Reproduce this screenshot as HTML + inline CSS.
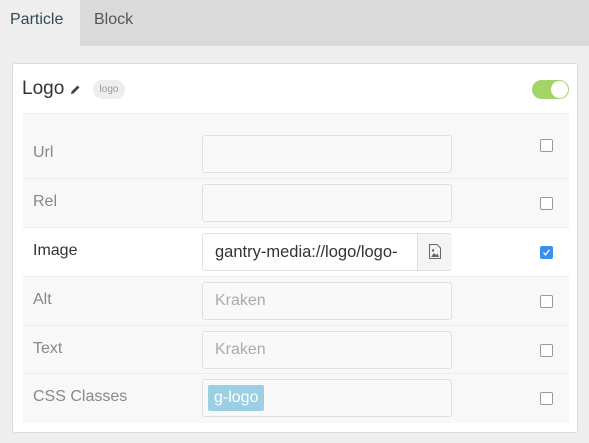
<!DOCTYPE html>
<html><head><style>
*{box-sizing:border-box;margin:0;padding:0}
body{width:589px;height:443px;background:#eeeeee;font-family:"Liberation Sans",sans-serif;position:relative;overflow:hidden}
.tabs{position:absolute;left:0;top:0;width:589px;height:46px;background:#dadada}
.tab{position:absolute;top:0;height:46px;line-height:40px;font-size:16px}
.card{position:absolute;left:12px;top:63px;width:566px;height:370px;background:#fff;border:1px solid #ddd;border-radius:3px}
.row{position:absolute;left:10px;width:546px;background:#f8f8f8;border-top:1px solid #ececec}
.lbl{position:absolute;left:10px;font-size:16px;color:#888}
.inp{position:absolute;left:179px;width:250px;height:38px;border:1px solid #e0e0e0;border-radius:3px;background:#f9f9f9;font-size:16px;color:#aaa;padding-left:12px;line-height:36px;overflow:hidden;white-space:nowrap}
.cb{position:absolute;left:517px;width:13px;height:13px;border:1px solid #999;border-radius:2px;background:#fff}
</style></head><body>
<div class="tabs">
<div class="tab" style="left:0;width:80px;background:#eeeeee;color:#2f4a5c;padding-left:10px">Particle</div>
<div class="tab" style="left:94px;color:#555">Block</div>
</div>
<div class="card">
<div style="position:absolute;left:9px;top:14px;font-size:19px;color:#333">Logo</div>
<svg style="position:absolute;left:57px;top:20px" width="11" height="11" viewBox="0 0 11 11"><path d="M1 10 L1.5 7.5 L7.5 1.5 L9.5 3.5 L3.5 9.5 Z" fill="#444"/></svg>
<div style="position:absolute;left:80px;top:16px;width:32px;height:19px;border-radius:10px;background:#eee;color:#999;font-size:10px;text-align:center;line-height:19px">logo</div>
<div style="position:absolute;left:519px;top:16px;width:37px;height:19px;border-radius:10px;background:#a3d46a"><div style="position:absolute;right:1px;top:1px;width:17px;height:17px;border-radius:50%;background:#fff"></div></div>
<div class="row" style="top:49px;height:65px"><div class="lbl" style="top:30px">Url</div><div class="inp" style="top:21px"></div><div class="cb" style="top:25px"></div></div>
<div class="row" style="top:114px;height:49px"><div class="lbl" style="top:14px">Rel</div><div class="inp" style="top:5px"></div><div class="cb" style="top:18px"></div></div>
<div class="row" style="top:163px;height:49px;background:#fff"><div class="lbl" style="top:14px;color:#333">Image</div><div class="inp" style="top:5px;background:#fff;color:#333;width:250px;padding-right:48px;font-size:16.5px">gantry-media://logo/logo-</div><div style="position:absolute;left:394px;top:6px;width:35px;height:36px;background:#f4f4f4;border-left:1px solid #ddd"><svg style="position:absolute;left:11px;top:10px" width="12" height="15" viewBox="0 0 12 15"><path d="M0.5 0.5H8L11.5 4V14.5H0.5Z" fill="none" stroke="#666"/><path d="M2 13L5 9L7 11L8.5 9.5L10 13Z" fill="#666"/><circle cx="4" cy="6.5" r="1.2" fill="#666"/></svg></div><div class="cb" style="top:18px;background:#3b8ff0;border-color:#3b8ff0"><svg width="11" height="11" viewBox="0 0 11 11" style="position:absolute;left:0;top:0"><path d="M2.5 5.5L4.5 7.8L8.5 2.8" fill="none" stroke="#fff" stroke-width="1.3"/></svg></div></div>
<div class="row" style="top:212px;height:49px"><div class="lbl" style="top:14px">Alt</div><div class="inp" style="top:5px">Kraken</div><div class="cb" style="top:18px"></div></div>
<div class="row" style="top:261px;height:48px"><div class="lbl" style="top:14px">Text</div><div class="inp" style="top:5px">Kraken</div><div class="cb" style="top:18px"></div></div>
<div class="row" style="top:309px;height:50px"><div class="lbl" style="top:14px">CSS Classes</div><div class="inp" style="top:5px;padding-left:5px"><span style="display:inline-block;background:#9ccfe4;color:#fff;border-radius:2px;padding:0 6px;line-height:26px;height:26px;vertical-align:top;margin-top:5px">g-logo</span></div><div class="cb" style="top:18px"></div></div>
</div>
</body></html>
